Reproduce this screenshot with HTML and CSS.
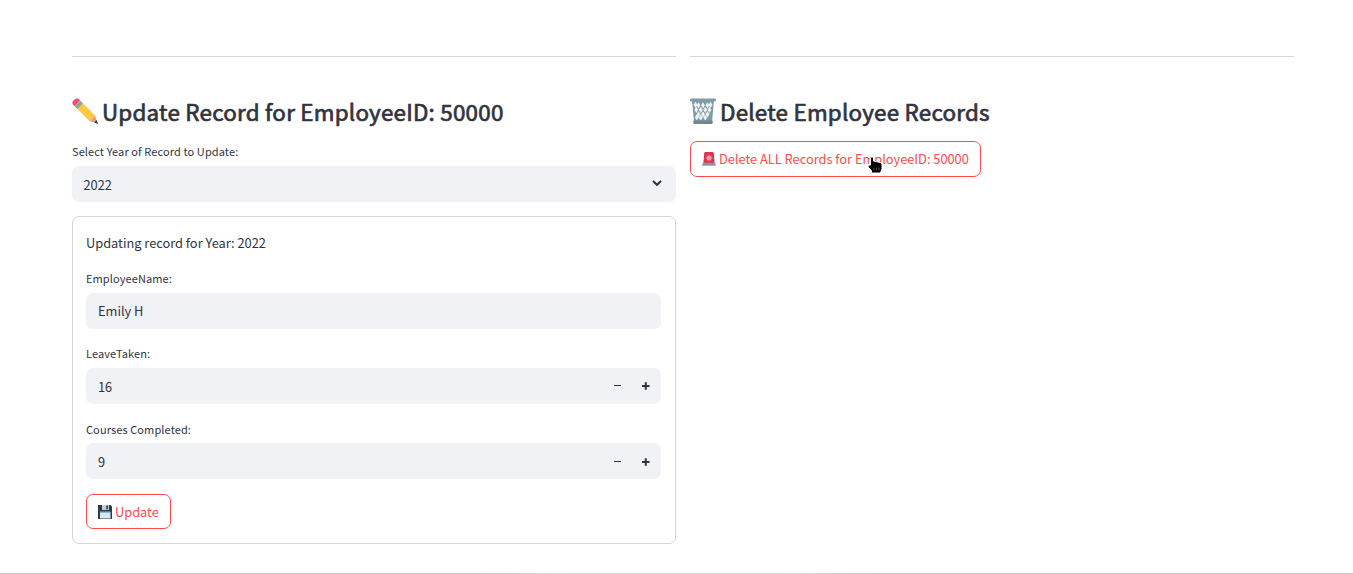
FILE: index.html
```html
<!DOCTYPE html>
<html lang="en">
<head>
<meta charset="utf-8">
<title>Employee Records</title>
<link rel="stylesheet" href="styles.css">
</head>
<body>
<main class="columns">
  <section class="column">
    <hr class="divider">
    <h2 class="heading">
      <svg class="heading-icon" viewBox="0 0 26 26"><path d="M1.5 7 7 1.5 23 17.5 17.5 23z" fill="#ffc83d"/><path d="M.8 6.2Q-.5 4 2 2T6.4.8L8 2.5 2.5 8z" fill="#f0506e"/><path d="M2.5 8 8 2.5 11 5.5 5.5 11z" fill="#9aabb4"/><path d="M4 9.5 9.5 4" stroke="#708791" stroke-width=".8"/><path d="M17.5 23 23 17.5 25.8 25.5z" fill="#dfa07a"/><path d="M22.3 24.4 24.5 22 26 26z" fill="#30363b"/></svg>
      <span>Update Record for EmployeeID: 50000</span>
    </h2>
    <label class="label select-label">Select Year of Record to Update:</label>
    <div class="field select low"><span>2022</span>
      <svg class="chevron" viewBox="0 0 10 6"><path d="M1 1l4 3.8L9 1" fill="none" stroke="#31333f" stroke-width="2"/></svg>
    </div>
    <form class="card">
      <p class="note">Updating record for Year: 2022</p>
      <label class="label">EmployeeName:</label>
      <div class="field"><span>Emily H</span></div>
      <label class="label">LeaveTaken:</label>
      <div class="field low"><span>16</span>
        <svg class="stepper" viewBox="0 0 36 8"><path d="M0 3.500h7" stroke="#31333f" stroke-width="1"/><path d="M28 4h7.5M31.75.3v7.4" stroke="#31333f" stroke-width="2"/></svg>
      </div>
      <label class="label courses-label">Courses Completed:</label>
      <div class="field low"><span>9</span>
        <svg class="stepper stepper-low" viewBox="0 0 36 8"><path d="M0 3.500h7" stroke="#31333f" stroke-width="1"/><path d="M28 4h7.5M31.75.3v7.4" stroke="#31333f" stroke-width="2"/></svg>
      </div>
      <button class="button update" type="button">
        <svg class="button-icon" viewBox="0 0 14 14"><path d="M0 0h12.5L14 1.5V14H0z" fill="#2f3a43"/><path d="M4 0h7v5H4z" fill="#c4d0d6"/><path d="M8.3.6h1.6v3.6H8.3z" fill="#2f3a43"/><path d="M2 7h10.500v6.500H2z" fill="#dce7ec"/><path d="M2 6.4h10.500v1.400H2z" fill="#66b6e8"/></svg>
        <span>Update</span>
      </button>
    </form>
  </section>
  <section class="column">
    <hr class="divider">
    <h2 class="heading">
      <svg class="heading-icon" viewBox="0 0 26 26"><path d="M2 2h22l-2 22H4z" fill="#829aa6"/><g fill="#eef3f5"><path id="hole" d="M8.500 4.300l1.900 3-1.900 3.200L6.600 7.300z"/><use href="#hole" x="4.500"/><use href="#hole" x="9"/><use href="#hole" x="-2.200" y="4.500"/><use href="#hole" x="2.250" y="4.500"/><use href="#hole" x="6.750" y="4.500"/><use href="#hole" x="11" y="4.500"/><use href="#hole" y="9"/><use href="#hole" x="4.500" y="9"/><use href="#hole" x="9" y="9"/><use href="#hole" x="-1.700" y="12"/><use href="#hole" x="2.250" y="12.300"/><use href="#hole" x="6.750" y="12.300"/><use href="#hole" x="-3" y="-.5"/><use href="#hole" x="12" y="-.5"/></g><rect y=".5" width="26" height="3" rx="1.2" fill="#829aa6"/><rect x="3.3" y="22.5" width="19.4" height="3.500" rx="1" fill="#708791"/></svg>
      <span>Delete Employee Records</span>
    </h2>
    <button class="button delete" type="button">
      <svg class="button-icon" viewBox="0 0 14 14"><path d="M1.4 11 2.2 1.2Q2.3 0 3.5 0h7Q11.700 0 11.800 1.200L12.600 11z" fill="#e22f4c"/><path d="M7 2l.7 2.200 2.100-1-1 2.100L11 6l-2.200.7 1 2.100-2.100-1L7 10l-.7-2.200-2.100 1 1-2.100L3 6l2.200-.7-1-2.100 2.100 1z" fill="#ffa3b0"/><path d="M.8 10.700h12.400L14 14H0z" fill="#8198a3"/><path d="M0 13h14v1H0z" fill="#a5b7bf"/></svg>
      <span>Delete ALL Records for EmployeeID: 50000</span>
      <svg class="cursor" viewBox="0 0 16 18"><path d="M3.500 1.500Q5 .3 6.500 1.500V5l7 1.500L15 8v4.500l-1.500 4.500h-9v-2.500L1 11Q.5 8.500 3.500 9z" fill="#000" stroke="#fff" stroke-width="1"/><path d="M7 11.500v3M9.500 11.500v3M12 11.500v3" stroke="#777" stroke-width=".7"/></svg>
    </button>
  </section>
</main>
<footer class="bottom-edge"></footer>
</body>
</html>
```
FILE: styles.css
```css
* { box-sizing: border-box; }
body {
  margin: 0;
  height: 574px;
  overflow: hidden;
  display: flex;
  flex-direction: column;
  justify-content: space-between;
  background: #fff;
  color: #31333f;
  font: 12.8px/20px "Noto Sans CJK SC", "Noto Sans", sans-serif;
}
svg { display: block; flex: none; overflow: visible; }
span { white-space: nowrap; }
.columns { display: grid; grid-template-columns: 604px 604px; gap: 14px; padding: 56px 0 0 72px; }
.divider { height: 1px; margin: 0; border: 0; background: #d6d6d9; }
.heading {
  display: flex;
  align-items: center;
  gap: 4px;
  height: 28px;
  margin: 40px 0 0;
  font-size: 22.4px;
  line-height: 28px;
  font-weight: 400;
  letter-spacing: .23px;
  -webkit-text-stroke: .7px #31333f;
}
.heading-icon { width: 26px; height: 26px; }
.label { display: block; height: 20px; margin: 14px 0 5px; font-size: 11px; letter-spacing: .1px; }
.select-label { margin-top: 16px; }
.courses-label { margin: 15px 0 4px; }
.field {
  display: flex;
  align-items: center;
  justify-content: space-between;
  height: 36px;
  padding: 0 12px;
  border-radius: 7px;
  background: #f0f2f6;
}
.low span { padding-top: 2px; }
.select { padding-left: 11.5px; }
.chevron { width: 10px; height: 6px; margin: -2px 2px 0 0; }
.stepper { width: 36px; height: 8px; margin-right: -1px; }
.stepper-low { margin-top: 2px; }
.card {
  height: 328px;
  margin: 14px 0 0;
  padding: 16px 14px 0 13px;
  border: 1px solid #d6d6d9;
  border-radius: 7px;
}
.note { margin: 0 0 15px; }
.button {
  position: relative;
  display: flex;
  align-items: center;
  gap: 3px;
  height: 36px;
  padding: 0 11px;
  border: 1px solid #ff4b4b;
  border-radius: 7px;
  background: #fff;
  color: #ff4b4b;
  font: inherit;
}
.update { width: 85px; height: 35px; margin-top: 15px; }
.delete { width: 291px; margin-top: 16px; }
.button-icon { width: 14px; height: 14px; }
.cursor { position: absolute; left: 176px; top: 14px; width: 16px; height: 18px; }
.bottom-edge { height: 1px; background: linear-gradient(90deg, #c8c7d2 0 35%, #dedde8 42% 58%, #c8c7d2 65%); }
```
